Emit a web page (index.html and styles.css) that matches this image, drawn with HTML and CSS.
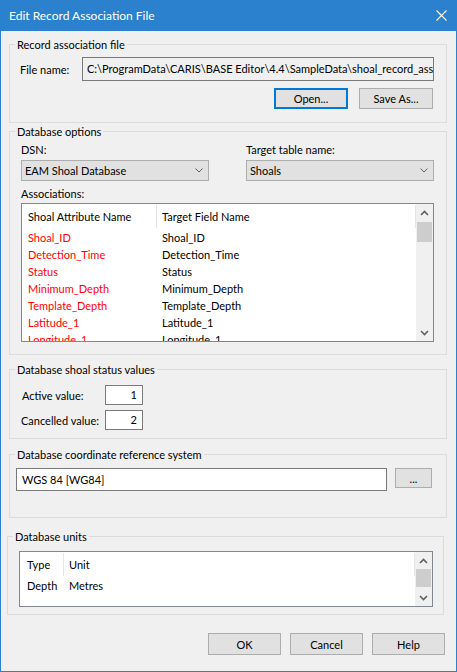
FILE: index.html
```html
<!DOCTYPE html>
<html>
<head>
<meta charset="utf-8">
<link rel="stylesheet" href="styles.css">
</head>
<body>
<div class="window">
  <div class="titlebar">
    <span class="title">Edit Record Association File</span>
    <svg class="close" width="11" height="11" viewBox="0 0 11 11"><path d="M0.5 0.5 L10.5 10.5 M10.5 0.5 L0.5 10.5" stroke="#fff" stroke-width="1.1" fill="none"/></svg>
  </div>

  <div class="group g1">
    <div class="legend">Record association file</div>
    <div class="file-row">
      <span class="file-label">File name:</span>
      <div class="textbox readonly path">C:\ProgramData\CARIS\BASE Editor\4.4\SampleData\shoal_record_association.xml</div>
    </div>
    <div class="btn-row">
      <div class="btn default">Open...</div>
      <div class="btn">Save As...</div>
    </div>
  </div>

  <div class="group g2">
    <div class="legend">Database options</div>
    <div class="cols">
      <div class="col">
        <div class="lbl">DSN:</div>
        <div class="combo"><span>EAM Shoal Database</span><svg width="8" height="5" viewBox="0 0 8 5"><polyline points="0.5,0.5 4,4 7.5,0.5" stroke="#606060" stroke-width="1" fill="none"/></svg></div>
      </div>
      <div class="col">
        <div class="lbl">Target table name:</div>
        <div class="combo"><span>Shoals</span><svg width="8" height="5" viewBox="0 0 8 5"><polyline points="0.5,0.5 4,4 7.5,0.5" stroke="#606060" stroke-width="1" fill="none"/></svg></div>
      </div>
    </div>
    <div class="lbl assoc-lbl">Associations:</div>
    <div class="listview lv-assoc">
      <div class="lv-main">
        <div class="lv-head">
          <div class="hc c1">Shoal Attribute Name</div>
          <div class="hc c2">Target Field Name</div>
        </div>
        <div class="lv-row"><div class="c1 red">Shoal_ID</div><div class="c2">Shoal_ID</div></div>
        <div class="lv-row"><div class="c1 red">Detection_Time</div><div class="c2">Detection_Time</div></div>
        <div class="lv-row"><div class="c1 red">Status</div><div class="c2">Status</div></div>
        <div class="lv-row"><div class="c1 red">Minimum_Depth</div><div class="c2">Minimum_Depth</div></div>
        <div class="lv-row"><div class="c1 red">Template_Depth</div><div class="c2">Template_Depth</div></div>
        <div class="lv-row"><div class="c1 red">Latitude_1</div><div class="c2">Latitude_1</div></div>
        <div class="lv-row"><div class="c1 red">Longitude_1</div><div class="c2">Longitude_1</div></div>
      </div>
      <div class="scrollbar">
        <div class="sb-arrow"><svg width="9" height="6" viewBox="0 0 9 6"><polyline points="1,5 4.5,1.5 8,5" stroke="#606060" stroke-width="1.6" fill="none"/></svg></div>
        <div class="sb-thumb"></div>
        <div class="sb-space"></div>
        <div class="sb-arrow"><svg width="9" height="6" viewBox="0 0 9 6"><polyline points="1,1 4.5,4.5 8,1" stroke="#606060" stroke-width="1.6" fill="none"/></svg></div>
      </div>
    </div>
  </div>

  <div class="group g3">
    <div class="legend">Database shoal status values</div>
    <div class="val-row first">
      <span class="val-label">Active value:</span>
      <div class="textbox num">1</div>
    </div>
    <div class="val-row">
      <span class="val-label cancel">Cancelled value:</span>
      <div class="textbox num">2</div>
    </div>
  </div>

  <div class="group g4">
    <div class="legend">Database coordinate reference system</div>
    <div class="crs-row">
      <div class="textbox crs">WGS 84 [WG84]</div>
      <div class="btn small">...</div>
    </div>
  </div>

  <div class="group g5">
    <div class="legend">Database units</div>
    <div class="listview lv-units">
      <div class="lv-main">
        <div class="lv-head">
          <div class="hc u1">Type</div>
          <div class="hc u2">Unit</div>
        </div>
        <div class="lv-row"><div class="u1">Depth</div><div class="u2">Metres</div></div>
      </div>
      <div class="scrollbar">
        <div class="sb-arrow"><svg width="9" height="6" viewBox="0 0 9 6"><polyline points="1,5 4.5,1.5 8,5" stroke="#606060" stroke-width="1.6" fill="none"/></svg></div>
        <div class="sb-thumb units"></div>
        <div class="sb-space"></div>
        <div class="sb-arrow"><svg width="9" height="6" viewBox="0 0 9 6"><polyline points="1,1 4.5,4.5 8,1" stroke="#606060" stroke-width="1.6" fill="none"/></svg></div>
      </div>
    </div>
  </div>

  <div class="footer">
    <div class="btn foot">OK</div>
    <div class="btn foot">Cancel</div>
    <div class="btn foot">Help</div>
  </div>
</div>
</body>
</html>
```

FILE: styles.css
```css
* { box-sizing: border-box; }
html, body { margin: 0; padding: 0; }
body {
  font-family: Lato, "Liberation Sans", sans-serif;
  font-size: 11px;
  color: #000;
  background: #f0f0f0;
}
.window {
  width: 457px;
  height: 672px;
  border: 1px solid #2b81cd;
  border-top: 0;
  background: #f0f0f0;
  display: flex;
  flex-direction: column;
  overflow: hidden;
}
.titlebar {
  height: 31px;
  margin: 0 -1px;
  background: #2b81cd;
  color: #fff;
  display: flex;
  align-items: center;
  justify-content: space-between;
  padding: 0 10px 0 9px;
  flex: none;
  font-size: 12px;
}
.title { line-height: 16px; }
.close { display: block; }

.group {
  border: 1px solid #dcdcdc;
  margin-left: 8px;
  width: 438px;
  flex: none;
}
.legend {
  margin: -8px 0 0 5px;
  padding: 0 2px;
  height: 16px;
  line-height: 16px;
  background: #f0f0f0;
  width: fit-content;
  white-space: nowrap;
}
.g1 { margin-top: 13px; height: 79px; }
.g2 { margin-top: 8px; height: 224px; }
.g3 { margin-top: 14px; height: 70px; }
.g4 { margin-top: 15px; height: 64px; }
.g5 { margin-top: 18px; height: 79px; margin-left: 6px; width: 437px; }

.textbox {
  border: 1px solid #7a7a7a;
  background: #fff;
  white-space: nowrap;
  overflow: hidden;
}
.textbox.readonly { background: #f0f0f0; }

.file-row {
  display: flex;
  align-items: center;
  margin-top: 4px;
  padding-left: 10px;
}
.file-label { width: 62px; }
.path {
  width: 352px;
  height: 24px;
  line-height: 22px;
  padding-left: 4px;
}
.btn-row {
  display: flex;
  justify-content: flex-end;
  gap: 11px;
  margin-top: 7px;
  padding-right: 13px;
}
.btn {
  width: 74px;
  height: 21px;
  border: 1px solid #adadad;
  background: #e1e1e1;
  display: flex;
  align-items: center;
  justify-content: center;
}
.btn.default { border: 2px solid #0078d7; }

.cols {
  display: flex;
  gap: 37px;
  padding-left: 11px;
  margin-top: 2px;
}
.col { width: 188px; }
.lbl { height: 16px; line-height: 16px; }
.combo {
  margin-top: 2px;
  height: 21px;
  border: 1px solid #adadad;
  background: #e1e1e1;
  display: flex;
  align-items: center;
  justify-content: space-between;
  padding: 0 5px 0 3px;
}
.combo svg { display: block; }
.assoc-lbl { margin-top: 5px; padding-left: 11px; }

.listview {
  border: 1px solid #828790;
  background: #fff;
  display: flex;
  overflow: hidden;
}
.lv-assoc { margin: 1px 0 0 11px; width: 413px; height: 139px; }
.lv-units { margin: 6px 0 0 11px; width: 414px; height: 56px; }
.lv-main { flex: 1; overflow: hidden; }
.lv-head { display: flex; height: 25px; padding-top: 1px; }
.hc {
  height: 23px;
  line-height: 23px;
  border-right: 1px solid #e5e5e5;
  white-space: nowrap;
}
.lv-row { display: flex; height: 17px; line-height: 17px; white-space: nowrap; }
.c1 { width: 135px; padding-left: 6px; flex: none; }
.c2 { flex: 1; padding-left: 5px; }
.u1 { width: 44px; padding-left: 7px; flex: none; }
.u2 { flex: 1; padding-left: 5px; }
.red { color: #ff0000; }

.scrollbar {
  width: 17px;
  flex: none;
  background: #f0f0f0;
  display: flex;
  flex-direction: column;
}
.sb-arrow {
  height: 17px;
  flex: none;
  display: flex;
  align-items: center;
  justify-content: center;
}
.sb-arrow svg { display: block; }
.sb-thumb {
  height: 20px;
  margin: 1px 1px 0;
  background: #cdcdcd;
  flex: none;
}
.sb-thumb.units { height: 18px; margin-top: 0; }
.sb-space { flex: 1; }

.val-row {
  display: flex;
  align-items: center;
  padding-left: 12px;
  margin-top: 5px;
}
.val-row.first { margin-top: 7px; }
.val-label { width: 83px; white-space: nowrap; }
.val-label.cancel { margin-left: -1px; width: 84px; }
.num {
  width: 38px;
  height: 20px;
  line-height: 18px;
  text-align: right;
  padding-right: 5px;
}

.crs-row {
  display: flex;
  align-items: flex-start;
  gap: 8px;
  margin-top: 5px;
  padding-left: 6px;
}
.crs {
  width: 371px;
  height: 23px;
  line-height: 21px;
  padding-left: 5px;
}
.btn.small { width: 37px; height: 20px; }

.footer {
  display: flex;
  justify-content: flex-end;
  gap: 9px;
  margin-top: 18px;
  padding-right: 11px;
  flex: none;
}
.btn.foot { width: 73px; height: 22px; }
```
